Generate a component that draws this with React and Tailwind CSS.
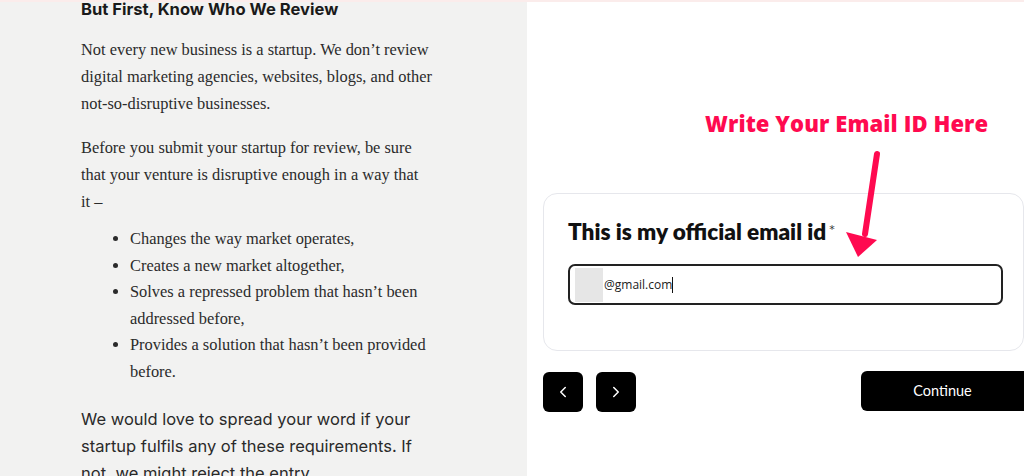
import { ChevronLeft, ChevronRight } from 'lucide-react';

export default function App() {
  const bullets = [
    "Changes the way market operates,",
    "Creates a new market altogether,",
    "Solves a repressed problem that hasn’t been addressed before,",
    "Provides a solution that hasn’t been provided before.",
  ];

  return (
    <div className="w-[1024px] h-[476px] overflow-hidden flex border-t-2 border-[#fbeceb] bg-white">
      {/* LEFT: article text */}
      <div className="w-[527px] h-full bg-[#f2f2f1] pl-[81px] text-[#222]">
        <h2 className="font-['Inter',sans-serif] font-bold text-[16.6px] leading-[20px] -mt-[3px] text-[#1a1a1a]">
          But First, Know Who We Review
        </h2>
        <div className="w-[354px] font-['Liberation_Serif',serif] text-[16.4px] leading-[27px] text-[#2b2b2b]">
          <p className="mt-[17px]">
            Not every new business is a startup. We don’t review digital marketing agencies, websites, blogs, and other not-so-disruptive businesses.
          </p>
          <p className="mt-[17px]">
            Before you submit your startup for review, be sure that your venture is disruptive enough in a way that it{"\u00a0"}–
          </p>
          <ul className="mt-[11px] pl-[49px] list-disc leading-[26.5px]">
            {bullets.map((b) => (
              <li key={b}>{b}</li>
            ))}
          </ul>
        </div>
        <p className="mt-[21px] w-[360px] font-['Inter',sans-serif] text-[16.5px] leading-[27px] text-[#2a2a2a]">
          We would love to spread your word if your startup fulfils any of these requirements. If not, we might reject the entry.
        </p>
      </div>

      {/* RIGHT: form */}
      <div className="relative flex-1 h-full pl-[16px] pt-[191px]">
        <div className="absolute left-[178px] top-[108px] font-['Open_Sans',sans-serif] font-extrabold text-[22px] leading-[26px] text-[#ff0a50] tracking-[0.1px]">
          Write Your Email ID Here
        </div>
        <svg className="absolute left-[310px] top-[140px]" width="50" height="120" viewBox="0 0 50 120">
          <line x1="40" y1="12" x2="28" y2="92" stroke="#ff0a50" strokeWidth="6" strokeLinecap="round" />
          <polygon points="9,90 40,98 21,115" fill="#ff0a50" />
        </svg>

        <div className="h-[158px] border border-[#e6e7ec] rounded-[14px] pl-[24px] pr-[20px] pt-[24px]">
          <div className="flex items-start font-['Lato',sans-serif] text-[#111]">
            <span className="font-extrabold text-[22.6px] leading-[27px]">This is my official email id</span>
            <span className="ml-[3px] mt-[4px] font-['DejaVu_Sans',sans-serif] text-[11px] text-[#333]">*</span>
          </div>
          <div className="mt-[19px] h-[41px] border-2 border-[#222] rounded-[7px] flex items-center pl-[5px]">
            <div className="w-[28px] h-[34px] bg-[#e6e6e6]" />
            <span className="ml-[1px] font-['Open_Sans',sans-serif] text-[12px] text-[#222]">@gmail.com</span>
            <span className="w-px h-[16px] bg-[#111]" />
          </div>
        </div>

        <div className="mt-[21px] flex items-center">
          <button className="w-[40px] h-[40px] bg-black rounded-[6px] flex items-center justify-center text-white">
            <ChevronLeft size={18} strokeWidth={2} />
          </button>
          <button className="ml-[13px] w-[40px] h-[40px] bg-black rounded-[6px] flex items-center justify-center text-white">
            <ChevronRight size={18} strokeWidth={2} />
          </button>
          <button className="ml-auto w-[163px] h-[40px] -mt-[2px] bg-black rounded-l-[6px] text-white font-['Lato',sans-serif] text-[14.5px]">
            Continue
          </button>
        </div>
      </div>
    </div>
  );
}
